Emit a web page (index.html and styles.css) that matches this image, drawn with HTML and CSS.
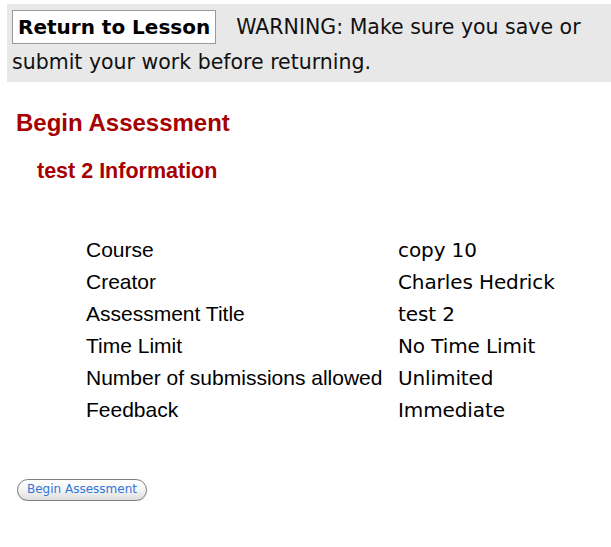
FILE: index.html
```html
<!DOCTYPE html>
<html>
<head>
<meta charset="utf-8">
<title>Begin Assessment</title>
<link rel="stylesheet" href="styles.css">
</head>
<body>
<div class="bar"><span class="return-btn">Return to Lesson</span><span class="warning">WARNING: Make sure you save or submit your work before returning.</span></div>
<h1 class="title">Begin Assessment</h1>
<h2 class="subtitle">test 2 Information</h2>
<div class="info">
  <div class="label">Course</div><div class="value">copy 10</div>
  <div class="label">Creator</div><div class="value">Charles Hedrick</div>
  <div class="label">Assessment Title</div><div class="value">test 2</div>
  <div class="label">Time Limit</div><div class="value">No Time Limit</div>
  <div class="label">Number of submissions allowed</div><div class="value">Unlimited</div>
  <div class="label">Feedback</div><div class="value">Immediate</div>
</div>
<div class="actions"><button class="begin-btn" type="button">Begin Assessment</button></div>
</body>
</html>
```
FILE: styles.css
```css
html, body {
  margin: 0;
  padding: 0;
  background: #ffffff;
}
body {
  font-family: "DejaVu Sans", Verdana, sans-serif;
  font-size: 20px;
  color: #111111;
}
.bar {
  margin: 4px 0 0 7px;
  padding: 6px 5px 2px 5px;
  background: #e8e8e8;
  font-size: 20.5px;
  line-height: 35px;
  color: #111111;
}
.return-btn {
  display: inline-block;
  margin-right: 20px;
  font-size: 20px;
  font-weight: bold;
  line-height: 24px;
  padding: 4px 5px;
  border: 1px solid #9a9a9a;
  background: #ffffff;
  color: #000000;
}
.title {
  margin: 26.7px 0 0 16px;
  font-family: "Liberation Sans", Arial, sans-serif;
  font-size: 24px;
  line-height: 28px;
  font-weight: bold;
  color: #a60000;
}
.subtitle {
  margin: 21.7px 0 0 37px;
  font-family: "Liberation Sans", Arial, sans-serif;
  font-size: 21.5px;
  line-height: 26px;
  font-weight: bold;
  color: #a60000;
}
.info {
  margin: 49.6px 0 0 86px;
  display: grid;
  grid-template-columns: 312px 1fr;
  align-items: baseline;
  line-height: 32px;
}
.label {
  font-family: "Liberation Sans", Arial, sans-serif;
  font-size: 21px;
  color: #000000;
}
.value {
  font-family: "DejaVu Sans", Verdana, sans-serif;
  font-size: 20px;
  letter-spacing: -0.1px;
  color: #000000;
}
.actions {
  margin: 53px 0 0 17px;
  line-height: 0;
}
.begin-btn {
  box-sizing: border-box;
  height: 22px;
  font-family: "DejaVu Sans", Verdana, sans-serif;
  font-size: 12px;
  line-height: 19px;
  padding: 0 9px;
  margin: 0;
  border: 1px solid #7f7f7f;
  border-radius: 11px;
  background: linear-gradient(#ffffff 0%, #f6f6f6 45%, #dedede 100%);
  color: #3277d8;
  box-shadow: 0 1px 1px rgba(0,0,0,0.15);
}
```
